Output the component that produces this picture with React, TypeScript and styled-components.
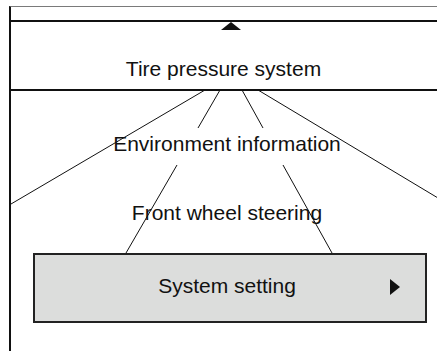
import React from "react";
import styled, { createGlobalStyle } from "styled-components";

const Global = createGlobalStyle`
  html, body {
    margin: 0;
    padding: 0;
    background: #ffffff;
    overflow: hidden;
  }
  body {
    font-family: "Liberation Sans", Arial, Helvetica, sans-serif;
    color: #111111;
  }
  * { box-sizing: border-box; }
`;

const Frame = styled.div`
  margin: 6px 0 0 9px;
  width: 434px;
  height: 345px;
  border-top: 1px solid #7a7a7a;
  border-left: 2px solid #111111;
  display: flex;
  flex-direction: column;
`;

const TopBand = styled.div`
  height: 13px;
  flex: none;
`;

const Header = styled.div`
  flex: none;
  height: 71px;
  border-top: 2px solid #111111;
  border-bottom: 2px solid #111111;
  display: flex;
  flex-direction: column;
  align-items: center;
`;

const UpCaret = styled.div`
  width: 0;
  height: 0;
  margin: 0 0 0 8px;
  border-left: 10px solid transparent;
  border-right: 10px solid transparent;
  border-bottom: 8px solid #111111;
`;

const Title = styled.div`
  margin-top: 27px;
  padding-right: 7px;
  font-size: 21px;
  line-height: 24px;
  white-space: nowrap;
`;

const Wheel = styled.div`
  position: relative;
  flex: 1;
  display: flex;
  flex-direction: column;
  align-items: center;
`;

const Edges = styled.svg`
  position: absolute;
  left: 0;
  top: 0;
  width: 100%;
  height: 100%;
  overflow: visible;
  pointer-events: none;
`;

const Item = styled.div<{ $gap: number }>`
  position: relative;
  margin-top: ${(p) => p.$gap}px;
  font-size: 21px;
  line-height: 24px;
  white-space: nowrap;
`;

const Selected = styled.div`
  position: relative;
  align-self: flex-start;
  margin: 28px 0 0 22px;
  width: 394px;
  height: 70px;
  background: #dcdddc;
  border: 2px solid #222222;
  display: flex;
  align-items: center;
  justify-content: center;
  padding-bottom: 4px;
`;

const SelectedLabel = styled.span`
  font-size: 21px;
  line-height: 24px;
  white-space: nowrap;
  margin-right: 6px;
`;

const RightCaret = styled.div`
  position: absolute;
  right: 25px;
  top: 50%;
  margin-top: -9px;
  width: 0;
  height: 0;
  border-top: 8px solid transparent;
  border-bottom: 8px solid transparent;
  border-left: 10px solid #111111;
`;

export default function App() {
  return (
    <>
      <Global />
      <Frame>
        <TopBand />
        <Header>
          <UpCaret />
          <Title>Tire pressure system</Title>
        </Header>
        <Wheel>
          <Edges viewBox="0 0 432 260" preserveAspectRatio="none">
            <g stroke="#111" strokeWidth="1" fill="none">
              <line x1="194" y1="-1" x2="0" y2="113" />
              <line x1="247" y1="-1" x2="432" y2="110" />
              <line x1="209" y1="-1" x2="187" y2="37" />
              <line x1="166" y1="74" x2="115" y2="162" />
              <line x1="231" y1="-1" x2="252" y2="37" />
              <line x1="272" y1="74" x2="321" y2="162" />
            </g>
          </Edges>
          <Item $gap={41}>Environment information</Item>
          <Item $gap={45}>Front wheel steering</Item>
          <Selected>
            <SelectedLabel>System setting</SelectedLabel>
            <RightCaret />
          </Selected>
        </Wheel>
      </Frame>
    </>
  );
}
